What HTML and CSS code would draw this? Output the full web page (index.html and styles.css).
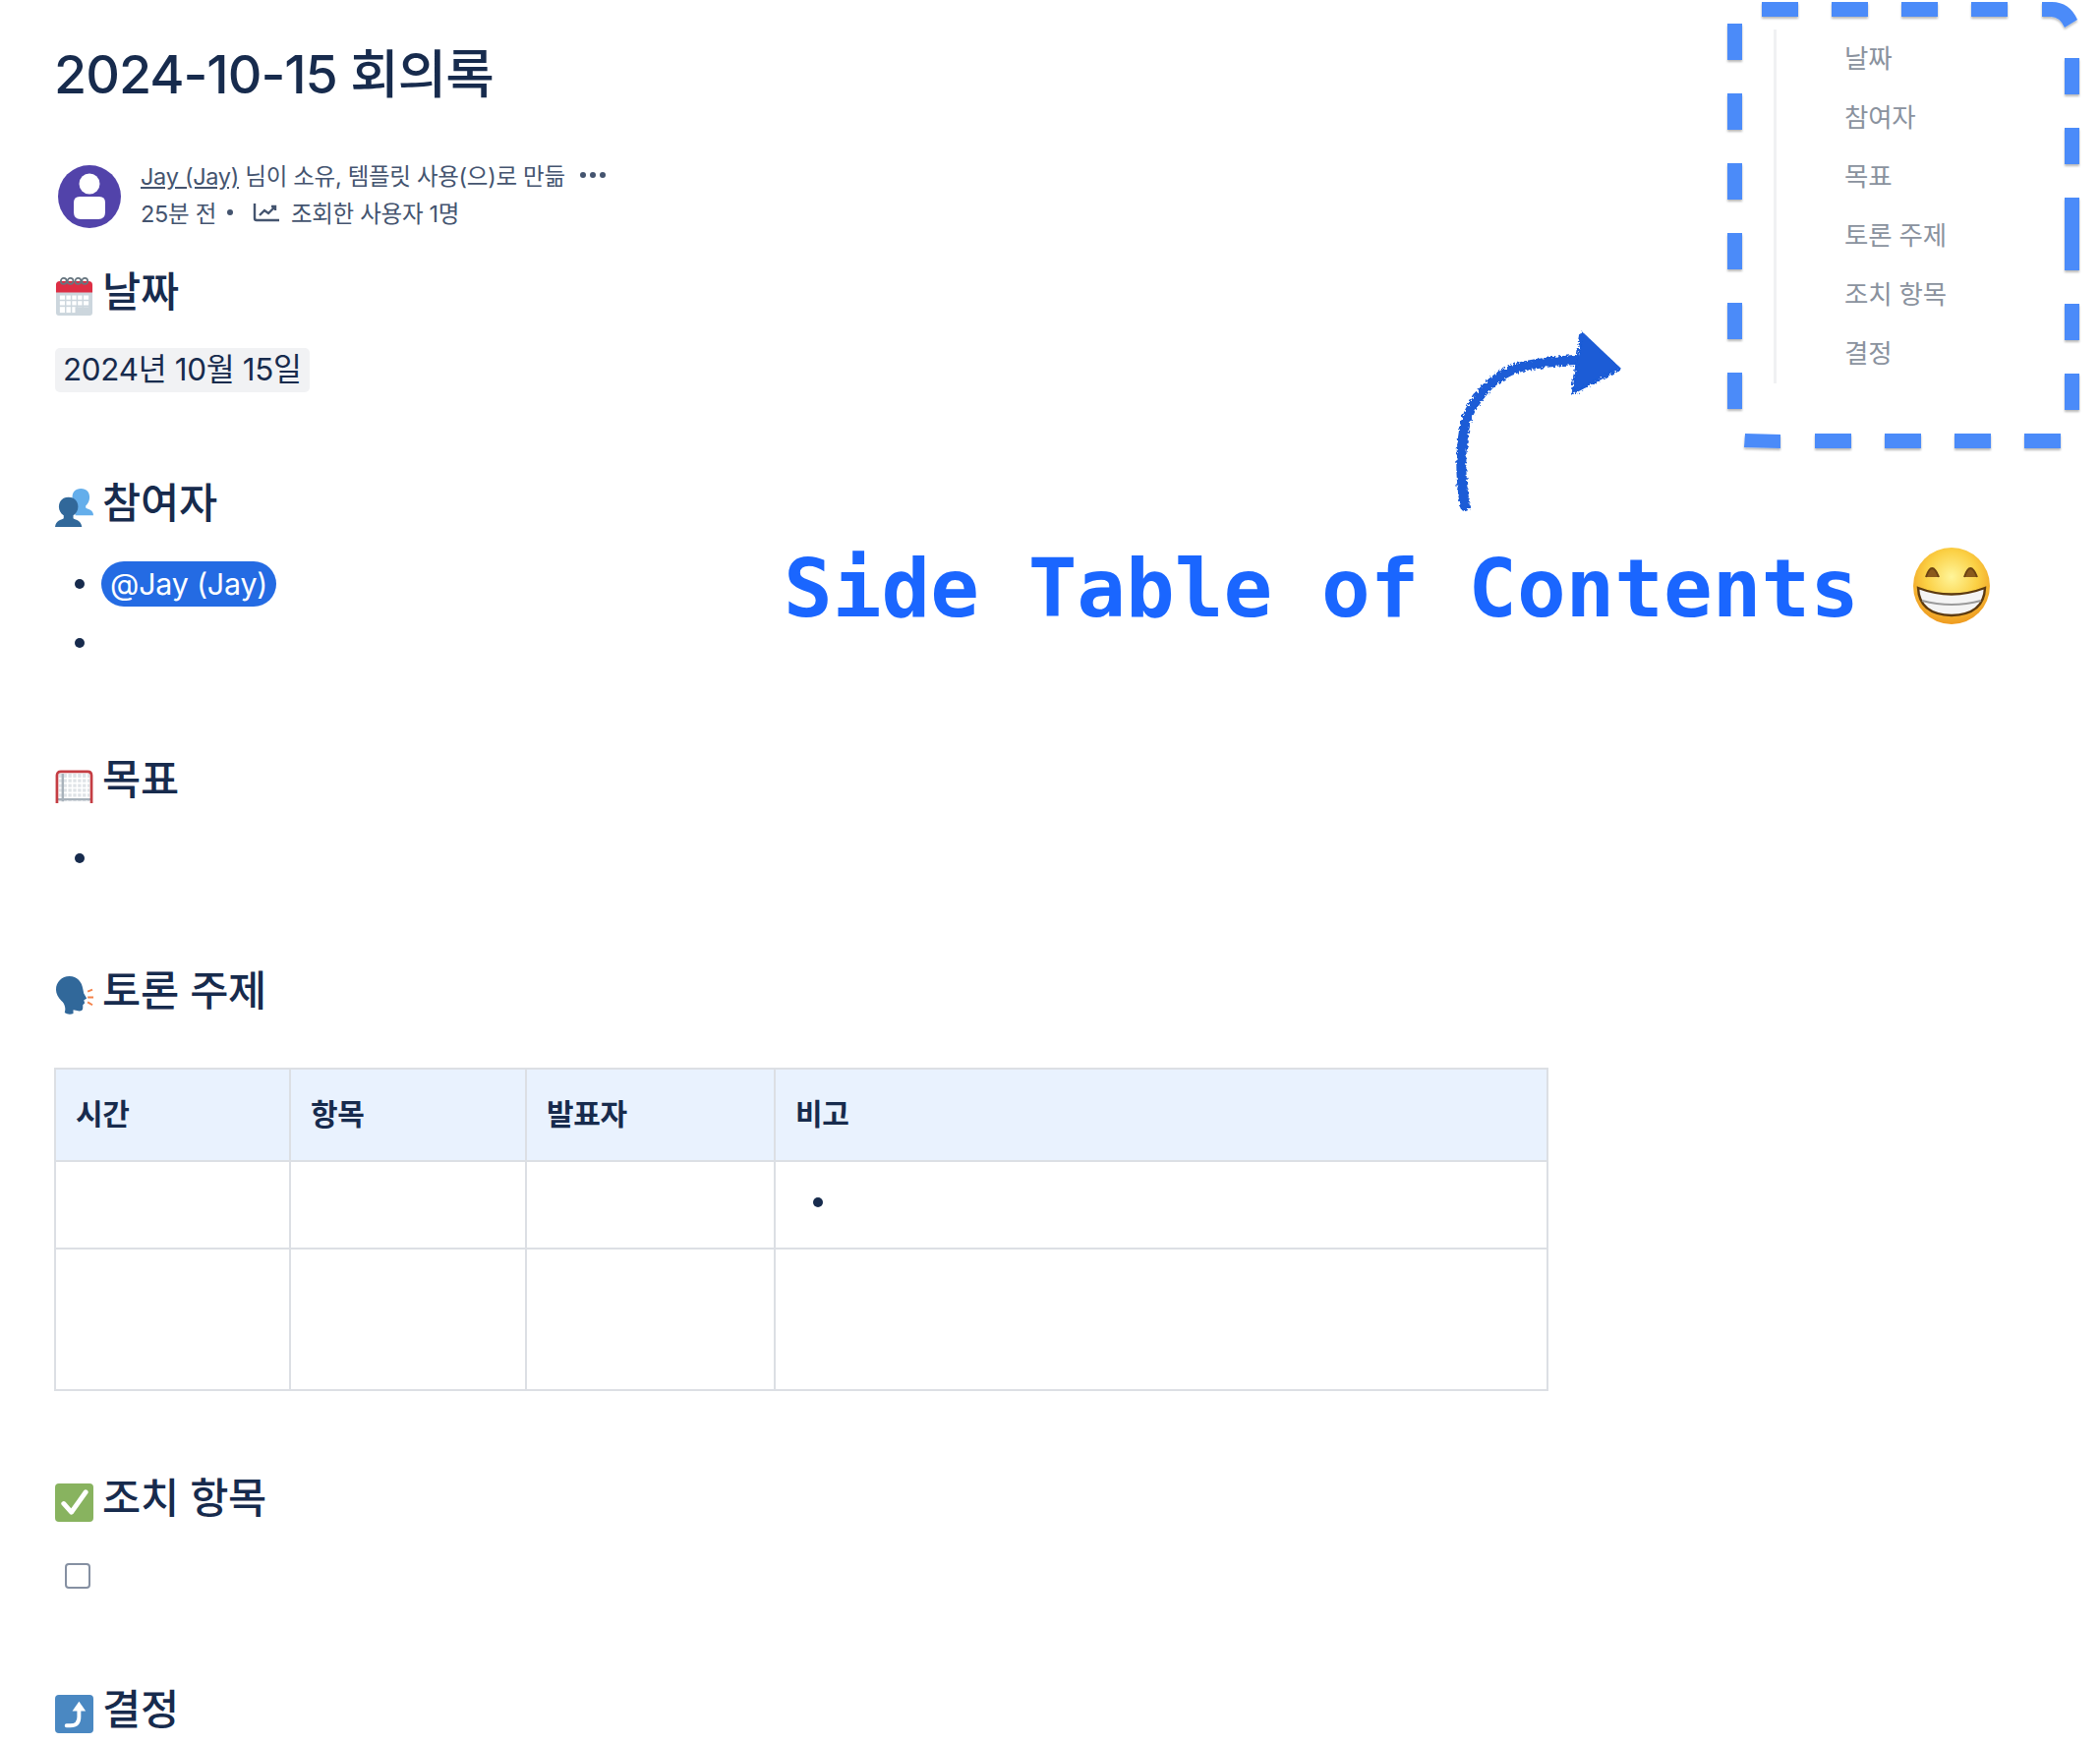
FILE: index.html
```html
<!DOCTYPE html>
<html lang="ko">
<head>
    <meta charset="UTF-8">
    <title>2024-10-15 회의록</title>
    <link rel="stylesheet" href="styles.css">
</head>
<body>
    <div class="page">
        <!--본문-->
        <main class="content">
            <h1 class="title">2024-10-15 회의록</h1>

            <div class="byline">
                <svg class="avatar" viewBox="0 0 64 64">
                    <circle cx="32" cy="32" r="32" fill="#5243aa"/>
                    <circle cx="32" cy="19" r="10.5" fill="#fff"/>
                    <path d="M22 32h20q6 0 6 6v10q0 7-7 7H23q-7 0-7-7V38q0-6 6-6z" fill="#fff"/>
                </svg>
                <div class="byline-text">
                    <div class="byline-row">
                        <span><a class="author" href="#">Jay (Jay)</a> 님이 소유, 템플릿 사용(으)로 만듦</span>
                        <svg class="more" viewBox="0 0 28 8"><circle cx="4" cy="4" r="3"/><circle cx="14" cy="4" r="3"/><circle cx="24" cy="4" r="3"/></svg>
                    </div>
                    <div class="byline-row">
                        <span>25분 전</span>
                        <span class="dot"></span>
                        <svg class="chart" viewBox="0 0 28 20"><path d="M2 1v15q0 2 2 2h23M7 13l5-5 4 3 7-7M19 4h4v4" fill="none" stroke="#44546f" stroke-width="2.4"/></svg>
                        <span>조회한 사용자 1명</span>
                    </div>
                </div>
            </div>

            <h2 class="heading heading-date">
                <svg class="emoji" viewBox="0 0 40 40">
                    <rect x="1" y="5" width="38" height="35" rx="3" fill="#ccd6dd"/>
                    <path d="M1 16V8q0-4 4-4h30q4 0 4 4v8z" fill="#dd2e44"/>
                    <g fill="#fff">
                        <rect x="5" y="19" width="30" height="12"/>
                        <rect x="5" y="31" width="16" height="6"/>
                    </g>
                    <path d="M11 17v23M17 17v23M23 17v23M29 17v23M3 24h34M3 30h34" stroke="#ccd6dd" stroke-width="1.5"/>
                    <g fill="none" stroke="#66757f" stroke-width="1.8">
                        <circle cx="9" cy="4" r="3"/><circle cx="16" cy="4" r="3"/><circle cx="24" cy="4" r="3"/><circle cx="31" cy="4" r="3"/>
                    </g>
                </svg>
                <span>날짜</span>
            </h2>
            <div class="date-chip">2024년 10월 15일</div>

            <h2 class="heading heading-people">
                <svg class="emoji" viewBox="0 0 40 40">
                    <path d="M27 0c6 0 9 4 9 9 0 4-2 7-4 9v2c3 2 8 2 8 8H21v-8l2-2c-3-2-5-5-5-9 0-5 3-9 9-9z" fill="#64aeeb"/>
                    <path d="M14 9c6 0 10 4 10 10 0 4-2 7-5 9v3c3 2 8 2 9 9H0c1-7 6-7 9-9v-3c-3-2-5-5-5-9 0-6 4-10 10-10z" fill="#31689a"/>
                </svg>
                <span>참여자</span>
            </h2>
            <ul class="list list-people">
                <li><span class="mention">@Jay (Jay)</span></li>
                <li></li>
            </ul>

            <h2 class="heading heading-goal">
                <svg class="emoji emoji-goal" viewBox="0 0 40 40">
                    <rect x="4" y="5" width="32" height="29" fill="#dfe3e7"/>
                    <path d="M8 5v29M13 5v29M18 5v29M23 5v29M28 5v29M33 5v29M3 10h34M3 15h34M3 20h34M3 25h34M3 30h34" stroke="#fff" stroke-width="1.6"/>
                    <path d="M8 5v29M3 32h34" stroke="#a7b1ba" stroke-width="2.4"/>
                    <path d="M2 36V7q0-4 4-4h28q4 0 4 4v29" fill="none" stroke="#c43d43" stroke-width="2.8"/>
                </svg>
                <span>목표</span>
            </h2>
            <ul class="list list-goal">
                <li></li>
            </ul>

            <h2 class="heading heading-talk">
                <svg class="emoji" viewBox="0 0 40 40">
                    <path d="M15 0c8 0 13 6 14 13l1 5 3 5-3 2 1 3-2 2 0 3c0 3-3 4-6 3l-4-1 0 4c-3 1-6 1-9-1 1-3 1-7-2-11C4 23 1 19 1 14 1 6 7 0 15 0z" fill="#31689a"/>
                    <path d="M34 16l5-2M34 22h6M34 27l5 3" stroke="#f4824a" stroke-width="2"/>
                </svg>
                <span>토론 주제</span>
            </h2>
            <table class="notes">
                <colgroup>
                    <col class="col-time"><col class="col-item"><col class="col-presenter"><col>
                </colgroup>
                <tr class="row-head">
                    <th>시간</th>
                    <th>항목</th>
                    <th>발표자</th>
                    <th>비고</th>
                </tr>
                <tr class="row-first">
                    <td></td>
                    <td></td>
                    <td></td>
                    <td><span class="bullet"></span></td>
                </tr>
                <tr class="row-second">
                    <td></td>
                    <td></td>
                    <td></td>
                    <td></td>
                </tr>
            </table>

            <h2 class="heading heading-action">
                <svg class="emoji" viewBox="0 0 40 40">
                    <rect width="40" height="40" rx="4" fill="#88b35f"/>
                    <path d="M9 21l8 9L32 9" fill="none" stroke="#fff" stroke-width="5" stroke-linecap="round" stroke-linejoin="round"/>
                </svg>
                <span>조치 항목</span>
            </h2>
            <div class="task"><span class="checkbox"></span></div>

            <h2 class="heading heading-decision">
                <svg class="emoji" viewBox="0 0 40 40">
                    <rect width="40" height="40" rx="4" fill="#4a88c2"/>
                    <path d="M12 32h4q9 0 9-9V14" fill="none" stroke="#fff" stroke-width="4" stroke-linecap="round"/>
                    <path d="M25 7l7 10H18z" fill="#fff"/>
                </svg>
                <span>결정</span>
            </h2>
        </main>

        <!--오른쪽 위 목차-->
        <nav class="side-toc">
            <a href="#">날짜</a>
            <a href="#">참여자</a>
            <a href="#">목표</a>
            <a href="#">토론 주제</a>
            <a href="#">조치 항목</a>
            <a href="#">결정</a>
        </nav>

        <!--화면 위에 그린 주석-->
        <svg class="markup" viewBox="0 0 2136 1774">
            <defs>
                <filter id="rough" x="-10%" y="-10%" width="120%" height="120%">
                    <feTurbulence type="fractalNoise" baseFrequency="0.35" numOctaves="2" seed="4"/>
                    <feDisplacementMap in="SourceGraphic" scale="6"/>
                </filter>
                <filter id="soft" x="-10%" y="-10%" width="120%" height="120%">
                    <feDropShadow dx="0" dy="2" stdDeviation="1" flood-color="#000" flood-opacity="0.28"/>
                </filter>
                <radialGradient id="face" cx="50%" cy="38%" r="62%">
                    <stop offset="0" stop-color="#fff59a"/>
                    <stop offset="0.55" stop-color="#fbd044"/>
                    <stop offset="1" stop-color="#ee9a1f"/>
                </radialGradient>
            </defs>

            <g fill="#4b8bf9" filter="url(#soft)">
                <rect x="1792" y="2" width="37" height="15"/>
                <rect x="1863" y="2" width="37" height="15"/>
                <rect x="1934" y="2" width="37" height="15"/>
                <rect x="2005" y="2" width="37" height="15"/>
                <path d="M2077 2h10q18 0 26 18l-13 8q-5-11-14-11h-9z"/>
                <rect x="1757" y="24" width="15" height="37"/>
                <rect x="1757" y="95" width="15" height="37"/>
                <rect x="1757" y="166" width="15" height="37"/>
                <rect x="1757" y="237" width="15" height="37"/>
                <rect x="1757" y="308" width="15" height="37"/>
                <rect x="1757" y="379" width="15" height="37"/>
                <rect x="2100" y="59" width="15" height="37"/>
                <rect x="2100" y="130" width="15" height="37"/>
                <rect x="2100" y="201" width="15" height="74"/>
                <rect x="2100" y="309" width="15" height="37"/>
                <rect x="2100" y="380" width="15" height="37"/>
                <path d="M1775 441l36 1v14l-37-1z"/>
                <rect x="1846" y="441" width="37" height="15"/>
                <rect x="1917" y="441" width="37" height="15"/>
                <rect x="1988" y="441" width="37" height="15"/>
                <rect x="2059" y="441" width="37" height="15"/>
            </g>

            <g filter="url(#rough)">
                <path d="M1490 515c-4-24-5-46-2-70 3-24 9-32 20-46 10-13 22-20 36-25 18-5 36-6 58-8" fill="none" stroke="#1a5bd6" stroke-width="10" stroke-linecap="round"/>
                <path d="M1609 339l38 36-48 25z" fill="#1a5bd6" stroke="#1a5bd6" stroke-width="3" stroke-linejoin="round"/>
            </g>

            <g>
                <ellipse cx="1985" cy="596" rx="39" ry="39" fill="url(#face)"/>
                <path d="M1959 587q6-18 13-0M1998 587q6-18 13-0" fill="#8a5a1c" stroke="#6b4212" stroke-width="2"/>
                <path d="M1951 598q34 13 68 0q-1 27-34 28q-33-1-34-28z" fill="#f4f4f4" stroke="#5c3a10" stroke-width="2.4"/>
                <path d="M1955 611q30 8 60 0" fill="none" stroke="#9a9a9a" stroke-width="2"/>
            </g>
        </svg>

        <div class="caption">Side Table of Contents</div>
    </div>
</body>
</html>
```

FILE: styles.css
```css
*{
    margin: 0;
    padding: 0;
    box-sizing: border-box;
}
html, body{
    background-color: #fff;
    overflow: hidden;
}
.page{
    position: relative;
    width: 2136px;
    height: 1774px;
    overflow: hidden;
    font-family: Inter, "Noto Sans CJK KR", sans-serif;
    color: #172b4d;
}
.content{
    padding-left: 56px;
}
.title{
    margin-top: 46px;
    margin-left: -1px;
    height: 60px;
    font-size: 53.8px;
    line-height: 60px;
    font-weight: 500;
    letter-spacing: -1px;
}

/*작성자 줄*/
.byline{
    display: flex;
    align-items: center;
    gap: 20px;
    margin-top: 62px;
    margin-left: 3px;
    height: 64px;
    color: #44546f;
    font-size: 23.5px;
    letter-spacing: -0.3px;
}
.avatar{
    width: 64px;
    height: 64px;
    flex: none;
}
.byline-text{
    display: flex;
    flex-direction: column;
    gap: 8px;
    margin-top: -7px;
}
.byline-row{
    display: flex;
    align-items: center;
    height: 30px;
}
.author{
    color: #44546f;
}
.more{
    width: 28px;
    height: 8px;
    margin-left: 14px;
    fill: #44546f;
}
.dot{
    width: 6px;
    height: 6px;
    margin: 0 20px 0 11px;
    border-radius: 50%;
    background-color: #44546f;
}
.chart{
    width: 28px;
    height: 20px;
    margin-right: 11px;
}

/*제목*/
.heading{
    display: flex;
    align-items: center;
    gap: 9px;
    height: 48px;
    font-size: 42.6px;
    line-height: 48px;
    font-weight: 500;
    letter-spacing: -0.2px;
}
.emoji{
    width: 39px;
    height: 39px;
    flex: none;
    margin-top: 9px;
}
.emoji-goal{
    margin-top: 16px;
}
.heading-date{
    margin-top: 41px;
}
.heading-people{
    margin-top: 89px;
}
.heading-goal{
    margin-top: 85px;
}
.heading-talk{
    margin-top: 81px;
}
.heading-action{
    margin-top: 85px;
}
.heading-decision{
    margin-top: 99px;
}

.date-chip{
    display: inline-block;
    margin-top: 33px;
    padding: 0 8px;
    height: 45px;
    line-height: 45px;
    font-size: 31.4px;
    border-radius: 5px;
    background-color: #f1f2f4;
    letter-spacing: -0.3px;
}

/*목록*/
.list{
    list-style: none;
}
.list li{
    position: relative;
    display: flex;
    align-items: center;
    height: 60px;
    padding-left: 47px;
}
.list li::before{
    content: "";
    position: absolute;
    left: 20px;
    top: 25px;
    width: 10px;
    height: 10px;
    border-radius: 50%;
    background-color: #172b4d;
}
.list-people{
    margin-top: 28px;
}
.list-goal{
    margin-top: 26px;
}
.mention{
    height: 46px;
    line-height: 46px;
    padding: 0 9px;
    font-size: 30.4px;
    color: #fff;
    border-radius: 23px;
    background-color: #246be3;
    letter-spacing: -0.2px;
}

/*표*/
.notes{
    width: 1520px;
    height: 329px;
    margin-top: 54px;
    margin-left: -1px;
    border-collapse: collapse;
    table-layout: fixed;
}
.notes th, .notes td{
    border: 2px solid #dcdfe4;
}
.notes th{
    padding: 0 20px 7px 20px;
    text-align: left;
    font-size: 30px;
    font-weight: 700;
    letter-spacing: -0.3px;
    background-color: #e9f2fe;
}
.col-time{
    width: 239px;
}
.col-item{
    width: 240px;
}
.col-presenter{
    width: 253px;
}
.row-head{
    height: 94px;
}
.row-first{
    height: 89px;
}
.row-second{
    height: 144px;
}
.row-first td{
    padding-bottom: 5px;
}
.bullet{
    display: block;
    width: 10px;
    height: 10px;
    margin-left: 38px;
    border-radius: 50%;
    background-color: #172b4d;
}

.task{
    margin-top: 42px;
    padding-left: 10px;
    height: 26px;
}
.checkbox{
    display: block;
    width: 26px;
    height: 26px;
    border: 2px solid #8590a2;
    border-radius: 4px;
}

/*오른쪽 목차*/
.side-toc{
    position: absolute;
    left: 1804px;
    top: 30px;
    width: 250px;
    height: 360px;
    padding-left: 69px;
    border-left: 3px solid #f0f1f3;
    display: flex;
    flex-direction: column;
}
.side-toc a{
    height: 60px;
    line-height: 58px;
    font-size: 26.5px;
    color: #8a929e;
    text-decoration: none;
    letter-spacing: -0.2px;
}

/*주석*/
.markup{
    position: absolute;
    left: 0;
    top: 0;
    width: 2136px;
    height: 1774px;
    pointer-events: none;
}
.caption{
    position: absolute;
    left: 797px;
    top: 549px;
    font-family: "DejaVu Sans Mono", monospace;
    font-size: 82.6px;
    line-height: 98px;
    font-weight: 700;
    color: #1a66ff;
    white-space: pre;
}
```
